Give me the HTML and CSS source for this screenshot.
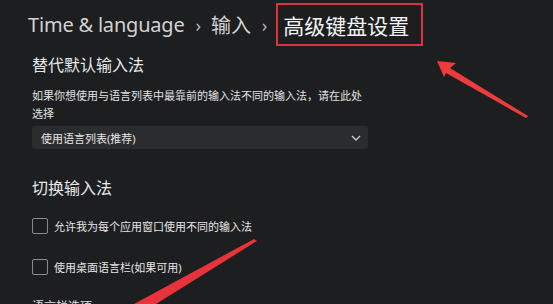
FILE: index.html
```html
<!DOCTYPE html>
<html lang="zh-CN">

<head>
    <meta charset="UTF-8">
    <title>高级键盘设置</title>
    <link rel="stylesheet" href="styles.css">
</head>

<body>
    <div class="page">

        <!-- breadcrumb -->
        <div class="crumbs">
            <span class="crumb">Time &amp; language</span>
            <span class="sep">&#8250;</span>
            <span class="crumb">输入</span>
            <span class="sep">&#8250;</span>
            <span class="current">高级键盘设置</span>
        </div>

        <div class="section">
            <h2>替代默认输入法</h2>
            <p class="desc">如果你想使用与语言列表中最靠前的输入法不同的输入法，请在此处选择</p>
            <div class="select">
                <span>使用语言列表(推荐)</span>
                <svg class="chev" width="10" height="6" viewBox="0 0 10 6">
                    <path d="M1 1 L5 5 L9 1" fill="none" stroke="#c8c8c8" stroke-width="1.4" />
                </svg>
            </div>
        </div>

        <div class="section">
            <h2 class="switch">切换输入法</h2>
            <label class="check"><span class="box"></span>允许我为每个应用窗口使用不同的输入法</label>
            <label class="check"><span class="box"></span>使用桌面语言栏(如果可用)</label>
            <p class="more">语言栏选项</p>
        </div>

    </div>

    <!-- red annotation arrows -->
    <svg class="arrows" width="553" height="304" viewBox="0 0 553 304">
        <polygon points="437,61 456,63 450,68 528,116 526,118 446,73 444,77" fill="#ee3b3b" />
        <polygon points="254,239 257,241 156,304 134,304" fill="#e8333b" />
    </svg>
</body>

</html>
```

FILE: styles.css
```css
* {
    margin: 0;
    padding: 0;
    box-sizing: border-box;
}

body {
    background: #1d1e20;
    color: #e6e6e6;
    font-family: 'Noto Sans', 'Noto Sans CJK SC', sans-serif;
    width: 553px;
    height: 304px;
    overflow: hidden;
    position: relative;
}

.page {
    padding-left: 32px;
}

.crumbs {
    display: flex;
    align-items: center;
    height: 46px;
    padding-top: 3px;
    margin-left: -4px;
    font-size: 20px;
    color: #d2d2d2;
}

.crumb {
    white-space: nowrap;
    letter-spacing: -0.2px;
}

.sep {
    font-size: 18px;
    color: #b8b8b8;
    margin: 0 10px 0 11px;
}

.current {
    display: flex;
    align-items: center;
    height: 43px;
    padding: 0 12px 0 5px;
    margin-left: -1px;
    border: 2px solid #d8363c;
    color: #f4f4f4;
    font-size: 21px;
}

h2 {
    font-size: 16px;
    font-weight: normal;
    color: #e8e8e8;
    margin-top: 8px;
    line-height: 22px;
}

.desc {
    font-size: 11px;
    line-height: 18px;
    width: 340px;
    margin-top: 11px;
    color: #e2e2e2;
}

.select {
    width: 336px;
    height: 23px;
    margin-top: 3px;
    background: #2a2c2d;
    border-radius: 2px;
    display: flex;
    align-items: center;
    justify-content: space-between;
    padding: 0 7px 0 9px;
    font-size: 11px;
    color: #e6e6e6;
}

.switch {
    margin-top: 28px;
}

.check {
    display: flex;
    align-items: center;
    gap: 6px;
    font-size: 11px;
    color: #e6e6e6;
    margin-top: 19px;
    height: 16px;
}

.check + .check {
    margin-top: 25px;
}

.box {
    width: 16px;
    height: 16px;
    border: 1px solid #8a8a8a;
    border-radius: 2px;
}

.more {
    font-size: 12px;
    margin-top: 22px;
    color: #e0e0e0;
}

.arrows {
    position: absolute;
    left: 0;
    top: 0;
    pointer-events: none;
}
```
